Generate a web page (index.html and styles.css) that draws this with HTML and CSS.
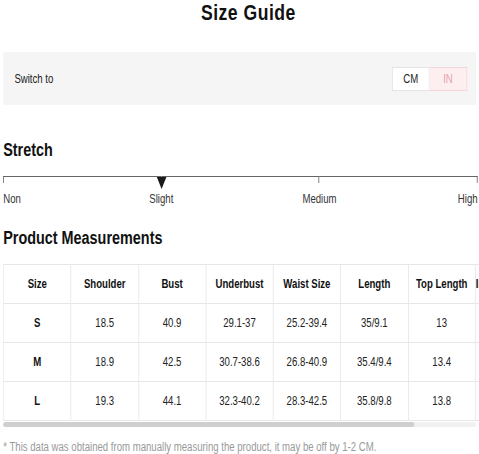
FILE: index.html
```html
<!DOCTYPE html>
<html>
<head>
<meta charset="utf-8">
<link rel="stylesheet" href="styles.css">
</head>
<body>
<div class="page">
  <h1 class="title">Size Guide</h1>

  <div class="switch-box">
    <span class="switch-label">Switch to</span>
    <div class="toggle">
      <span class="opt opt-cm">CM</span>
      <span class="opt opt-in">IN</span>
    </div>
  </div>

  <h2 class="heading heading-stretch">Stretch</h2>
  <div class="scale">
    <div class="seg seg-1"></div>
    <div class="seg seg-2"></div>
    <div class="seg seg-3"></div>
    <span class="marker"></span>
  </div>
  <div class="scale-labels">
    <span class="lbl lbl-non">Non</span>
    <span class="lbl lbl-slight">Slight</span>
    <span class="lbl lbl-medium">Medium</span>
    <span class="lbl lbl-high">High</span>
  </div>

  <h2 class="heading heading-measure">Product Measurements</h2>
  <div class="table-wrap">
    <table class="size-table">
      <colgroup>
        <col class="col"><col class="col"><col class="col"><col class="col"><col class="col"><col class="col"><col class="col"><col class="col">
      </colgroup>
      <thead>
        <tr>
          <th>Size</th><th>Shoulder</th><th>Bust</th><th>Underbust</th><th>Waist Size</th><th>Length</th><th>Top Length</th><th>Inseam Length</th>
        </tr>
      </thead>
      <tbody>
        <tr>
          <th>S</th><td>18.5</td><td>40.9</td><td>29.1-37</td><td>25.2-39.4</td><td>35/9.1</td><td>13</td><td>5.9</td>
        </tr>
        <tr>
          <th>M</th><td>18.9</td><td>42.5</td><td>30.7-38.6</td><td>26.8-40.9</td><td>35.4/9.4</td><td>13.4</td><td>6.1</td>
        </tr>
        <tr>
          <th>L</th><td>19.3</td><td>44.1</td><td>32.3-40.2</td><td>28.3-42.5</td><td>35.8/9.8</td><td>13.8</td><td>6.3</td>
        </tr>
      </tbody>
    </table>
  </div>
  <div class="scrollbar"><div class="thumb"></div></div>

  <p class="note">* This data was obtained from manually measuring the product, it may be off by 1-2 CM.</p>
</div>
</body>
</html>
```

FILE: styles.css
```css
html, body {
  margin: 0;
  padding: 0;
  background: #fff;
  overflow: hidden;
}

.page {
  width: 599px;
  padding-left: 4px;
  box-sizing: border-box;
  transform: scaleX(0.8);
  transform-origin: 0 0;
  font-family: "Liberation Sans", Arial, sans-serif;
  color: #222;
}

.title {
  margin: 0;
  padding-left: 18px;
  text-align: center;
  font-size: 22px;
  letter-spacing: 0.6px;
  line-height: 26px;
  font-weight: bold;
  color: #111;
}

.switch-box {
  margin-top: 26px;
  width: 591px;
  height: 53px;
  background: #f5f5f5;
  display: flex;
  align-items: center;
  justify-content: space-between;
  padding: 0 11px 0 14px;
  box-sizing: border-box;
}

.switch-label {
  font-size: 12px;
  color: #222;
}

.toggle {
  display: flex;
  height: 24px;
}

.opt {
  width: 47px;
  display: flex;
  align-items: center;
  justify-content: center;
  font-size: 12px;
  box-sizing: border-box;
}

.opt-cm {
  background: #fff;
  border: 1px solid #e4e4e4;
  color: #222;
}

.opt-in {
  background: #fdeff0;
  border: 1px solid #f4d6da;
  border-left: none;
  color: #e6a2aa;
}

.heading {
  margin: 0;
  font-size: 18px;
  line-height: 22px;
  font-weight: bold;
  color: #111;
}

.heading-stretch {
  margin-top: 34px;
}

.scale {
  margin-top: 15px;
  width: 593px;
  display: grid;
  grid-template-columns: repeat(3, 1fr);
  position: relative;
}

.seg {
  height: 6px;
  border-top: 1px solid #666;
}

.seg-1 {
  border-left: 1px solid #666;
}

.seg-2,
.seg-3 {
  border-right: 1px solid #666;
}

.marker {
  position: absolute;
  left: 33.333%;
  top: 1px;
  transform: translateX(-50%);
  width: 0;
  height: 0;
  border-left: 6px solid transparent;
  border-right: 6px solid transparent;
  border-top: 12px solid #1a1a1a;
}

.scale-labels {
  margin-top: 9px;
  width: 593px;
  display: grid;
  grid-template-columns: repeat(6, 1fr);
  font-size: 12px;
  line-height: 14px;
  color: #333;
}

.lbl-non {
  grid-column: 1;
  justify-self: start;
}

.lbl-slight {
  grid-column: 2 / span 2;
  justify-self: center;
}

.lbl-medium {
  grid-column: 4 / span 2;
  justify-self: center;
}

.lbl-high {
  grid-column: 6;
  justify-self: end;
}

.heading-measure {
  margin-top: 21px;
}

.table-wrap {
  margin-top: 15px;
  width: 595px;
  overflow: hidden;
}

.size-table {
  border-collapse: collapse;
  table-layout: fixed;
  width: 674px;
  font-size: 12px;
  color: #222;
}

.col {
  width: 84.25px;
}

.size-table th,
.size-table td {
  height: 38px;
  padding: 0;
  text-align: center;
  vertical-align: middle;
  border: 1px solid #e7e7e7;
  white-space: nowrap;
  overflow: hidden;
}

.size-table th {
  font-weight: bold;
  color: #111;
}

.scrollbar {
  margin-top: 1px;
  width: 591px;
  height: 5px;
  background: #f1f1f1;
  border-radius: 3px;
}

.thumb {
  width: 514px;
  height: 5px;
  background: #cfcfcf;
  border-radius: 3px;
}

.note {
  margin: 13px 0 0;
  font-size: 12px;
  line-height: 14px;
  color: #999;
}
```
